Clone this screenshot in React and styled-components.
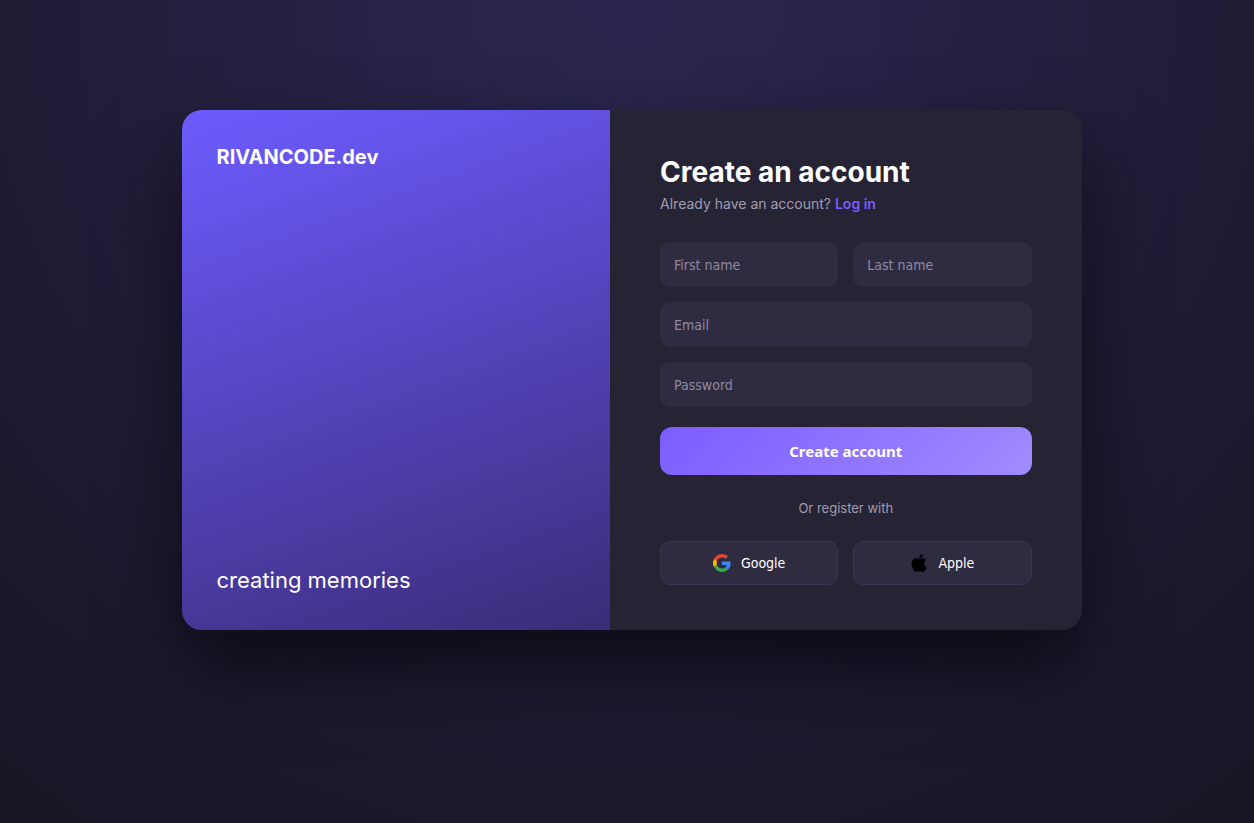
import React from 'react'
import styled, { createGlobalStyle } from 'styled-components'

const socials = [
  { name: 'Google', Icon: GoogleIcon },
  { name: 'Apple', Icon: AppleIcon },
]

export default function App() {
  const handleSubmit = (e) => e.preventDefault()

  return (
    <>
      <GlobalStyle />
      <Page>
        <Card>
          <Hero>
            <Brand>RIVANCODE.dev</Brand>
            <Tagline>creating memories</Tagline>
          </Hero>
          <Content>
            <Title>Create an account</Title>
            <Subtitle>
              Already have an account? <a href="#login">Log in</a>
            </Subtitle>
            <Form onSubmit={handleSubmit}>
              <Row>
                <Input name="firstName" placeholder="First name" aria-label="First name" />
                <Input name="lastName" placeholder="Last name" aria-label="Last name" />
              </Row>
              <Input type="email" name="email" placeholder="Email" aria-label="Email" />
              <Input
                type="password"
                name="password"
                placeholder="Password"
                aria-label="Password"
              />
              <SubmitButton type="submit">Create account</SubmitButton>
            </Form>
            <Divider>Or register with</Divider>
            <Row>
              {socials.map(({ name, Icon }) => (
                <SocialButton type="button" key={name}>
                  <Icon />
                  {name}
                </SocialButton>
              ))}
            </Row>
          </Content>
        </Card>
      </Page>
    </>
  )
}

function GoogleIcon() {
  return (
    <svg viewBox="0 0 48 48" width="18" height="18" aria-hidden="true">
      <path
        fill="#EA4335"
        d="M24 9.5c3.54 0 6.71 1.22 9.21 3.6l6.85-6.85C35.9 2.38 30.47 0 24 0 14.62 0 6.51 5.38 2.56 13.22l7.98 6.19C12.43 13.72 17.74 9.5 24 9.5z"
      />
      <path
        fill="#4285F4"
        d="M46.98 24.55c0-1.57-.15-3.09-.38-4.55H24v9.02h12.94c-.58 2.96-2.26 5.48-4.78 7.18l7.73 6c4.51-4.18 7.09-10.36 7.09-17.65z"
      />
      <path
        fill="#FBBC05"
        d="M10.53 28.59c-.48-1.45-.76-2.99-.76-4.59s.27-3.14.76-4.59l-7.98-6.19C.92 16.46 0 20.12 0 24c0 3.88.92 7.54 2.56 10.78l7.97-6.19z"
      />
      <path
        fill="#34A853"
        d="M24 48c6.48 0 11.93-2.13 15.89-5.81l-7.73-6c-2.15 1.45-4.92 2.3-8.16 2.3-6.26 0-11.57-4.22-13.47-9.91l-7.98 6.19C6.51 42.62 14.62 48 24 48z"
      />
    </svg>
  )
}

function AppleIcon() {
  return (
    <svg viewBox="0 32 376 448" width="18" height="18" fill="#000" aria-hidden="true">
      <path d="M318.7 268.7c-.2-36.7 16.4-64.4 50-84.8-18.8-26.9-47.2-41.7-84.7-44.6-35.5-2.8-74.3 20.7-88.5 20.7-15 0-49.4-19.7-76.4-19.7C63.3 141.2 4 184.8 4 273.5q0 39.3 14.4 81.2c12.8 36.7 59 126.7 107.2 125.2 25.2-.6 43-17.9 75.8-17.9 31.8 0 48.3 17.9 76.4 17.9 48.6-.7 90.4-82.5 102.6-119.3-65.2-30.7-61.7-90-61.7-91.9zm-56.6-164.2c27.3-32.4 24.8-61.9 24-72.5-24.1 1.4-52 16.4-67.9 34.9-17.5 19.8-27.8 44.3-25.6 71.9 26.1 2 49.9-11.4 69.5-34.3z" />
    </svg>
  )
}

const GlobalStyle = createGlobalStyle`
  * {
    box-sizing: border-box;
    margin: 0;
    padding: 0;
  }
  body {
    font-family: Inter, 'Liberation Sans', sans-serif;
    background: #1c1a2e;
  }
`
const Page = styled.main`
  min-height: 100vh;
  display: flex;
  justify-content: center;
  align-items: flex-start;
  padding: 110px 10px 110px 19px;
  background: radial-gradient(circle at top, #2b2650, #1c192e 78%, #181423);
`
const Card = styled.section`
  flex: 0 1 900px;
  min-height: 520px;
  display: grid;
  grid-template-columns: minmax(0, 1fr) minmax(0, 1.1fr);
  background: #262335;
  border-radius: 20px;
  overflow: hidden;
  box-shadow: 0 40px 80px rgba(0, 0, 0, 0.6);
`
const Hero = styled.div`
  display: flex;
  flex-direction: column;
  justify-content: space-between;
  padding: 35px;
  color: #fff;
  background: linear-gradient(160deg, #6c5cff, #3b2c78);
`
const Brand = styled.div`
  font-size: 20px;
  font-weight: 700;
`
const Tagline = styled.p`
  font-size: 22px;
  line-height: 30px;
`
const Content = styled.div`
  display: flex;
  flex-direction: column;
  justify-content: center;
  padding: 0 50px;
`
const Title = styled.h1`
  font-size: 28px;
  font-weight: 700;
  color: #fff;
  margin-bottom: 6px;
`
const Subtitle = styled.p`
  font-size: 14px;
  color: #a09cb0;
  margin-bottom: 30px;
  a {
    color: #7c5cff;
    font-weight: 600;
    text-decoration: none;
  }
`
const Form = styled.form`
  display: flex;
  flex-direction: column;
  gap: 15px;
`
const Row = styled.div`
  display: flex;
  gap: 15px;
`
const Input = styled.input`
  flex: 1;
  min-width: 0;
  padding: 15px 14px 13px;
  border: none;
  border-radius: 10px;
  outline: none;
  background: #2f2b40;
  color: #fff;
  font-family: 'DejaVu Sans Condensed', 'Noto Sans', sans-serif;
  font-size: 14px;
  line-height: 17px;
  &::placeholder {
    color: #8e89a6;
  }
`
const SubmitButton = styled.button`
  margin-top: 5px;
  padding: 14px;
  border: none;
  border-radius: 12px;
  background: linear-gradient(135deg, #7c5cff, #a18bff);
  color: #fff;
  font-family: 'Noto Sans', sans-serif;
  font-size: 15px;
  font-weight: 700;
  line-height: 20px;
  cursor: pointer;
`
const Divider = styled.p`
  margin: 25px 0;
  text-align: center;
  font-size: 13px;
  color: #a09cb0;
`
const SocialButton = styled.button`
  flex: 1;
  display: flex;
  align-items: center;
  justify-content: center;
  gap: 10px;
  padding: 12px;
  border: 1px solid #3a3550;
  border-radius: 10px;
  background: #2f2b40;
  color: #fff;
  font-family: 'DejaVu Sans Condensed', 'Noto Sans', sans-serif;
  font-size: 14px;
  line-height: 18px;
  cursor: pointer;
`
